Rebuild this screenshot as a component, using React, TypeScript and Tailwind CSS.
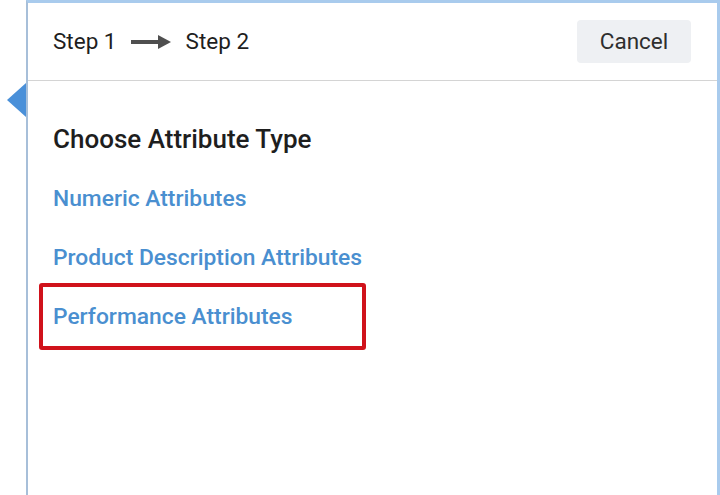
import React from "react";

const links = ["Numeric Attributes", "Product Description Attributes"];

function Arrow() {
  return (
    <svg width="41" height="16" viewBox="0 0 41 16" className="mx-[14px]">
      <rect x="0" y="6" width="29" height="4" fill="#4f4f4f" />
      <path d="M27 1 L40 8 L27 15 Z" fill="#4f4f4f" />
    </svg>
  );
}

export default function App() {
  return (
    <div className="w-[720px] h-[495px] bg-white overflow-hidden font-['Roboto',sans-serif]">
      <div className="relative ml-[26px] w-[694px] h-[495px] border-l-2 border-t-[3px] border-r-[3px] border-l-[#a7bfd9] border-t-[#a9cbed] border-r-[#a9cbed] bg-white">
        <div className="absolute left-[-21px] top-[80px] w-0 h-0 border-y-[17px] border-y-transparent border-r-[19px] border-r-[#4a90d9]" />
        <header className="h-[78px] flex items-start justify-between pl-[25px] pr-[26px] pt-[17px] border-b border-[#d4d4d4]">
          <div className="flex items-center h-[43px] text-[22.5px] text-[#1e1e1e]">
            <span>Step 1</span>
            <Arrow />
            <span>Step 2</span>
          </div>
          <button className="w-[114px] h-[43px] rounded-[4px] bg-[#eef0f3] text-[22.5px] text-[#2e2e2e]">
            Cancel
          </button>
        </header>
        <main className="flex flex-col pl-[25px]">
          <h2 className="mt-[43px] h-[30px] leading-[30px] text-[26px] font-medium text-[#1e1e1e]">
            Choose Attribute Type
          </h2>
          {links.map((l, i) => (
            <a
              key={l}
              className={`${i === 0 ? "mt-[32px]" : "mt-[33px]"} h-[26px] leading-[26px] text-[22.8px] font-medium text-[#4a8fd0]`}
            >
              {l}
            </a>
          ))}
          <div className="mt-[12px] -ml-[14px] w-[327px] h-[67px] border-4 border-[#d0121b] rounded-[3px] flex items-center pl-[10px]">
            <a className="h-[26px] leading-[26px] text-[22.8px] font-medium text-[#4a8fd0]">
              Performance Attributes
            </a>
          </div>
        </main>
      </div>
    </div>
  );
}
